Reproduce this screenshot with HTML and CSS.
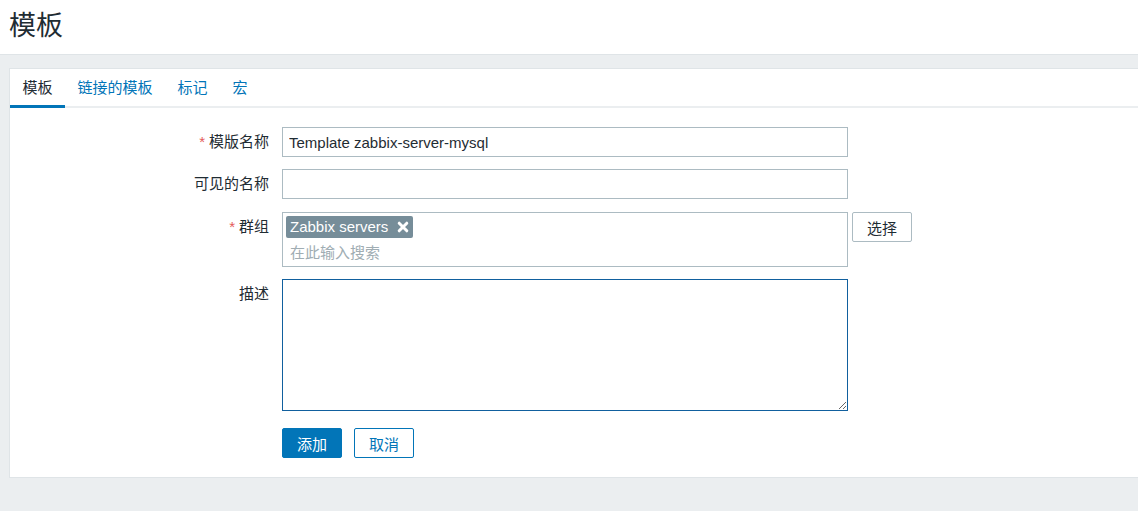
FILE: index.html
```html
<!DOCTYPE html>
<html lang="zh-CN">
<head>
<meta charset="utf-8">
<title>模板</title>
<link rel="stylesheet" href="styles.css">
</head>
<body>
<header class="page-header">
  <h1 class="page-title">模板</h1>
</header>
<main class="panel">
  <ul class="tabs">
    <li class="tab tab-active">模板</li>
    <li class="tab">链接的模板</li>
    <li class="tab">标记</li>
    <li class="tab">宏</li>
  </ul>
  <form class="form">
    <div class="row">
      <label class="label"><span class="req">*</span>模版名称</label>
      <div class="field"><input class="input" type="text" value="Template zabbix-server-mysql"></div>
    </div>
    <div class="row">
      <label class="label">可见的名称</label>
      <div class="field"><input class="input" type="text" value=""></div>
    </div>
    <div class="row row-group">
      <label class="label"><span class="req">*</span>群组</label>
      <div class="field field-inline">
        <div class="multiselect">
          <div class="tags">
            <span class="tag">Zabbix servers<svg class="tag-x" viewBox="0 0 12 12" width="12" height="12"><path d="M2.2 2.2 L9.8 9.8 M9.8 2.2 L2.2 9.8" stroke="#fff" stroke-width="3" stroke-linecap="round"/></svg></span>
          </div>
          <div class="ms-search">在此输入搜索</div>
        </div>
        <button type="button" class="btn-alt">选择</button>
      </div>
    </div>
    <div class="row">
      <label class="label">描述</label>
      <div class="field"><textarea class="textarea"></textarea></div>
    </div>
    <div class="row row-buttons">
      <div class="label"></div>
      <div class="field buttons">
        <button type="button" class="btn-primary">添加</button>
        <button type="button" class="btn-secondary">取消</button>
      </div>
    </div>
  </form>
</main>
</body>
</html>
```

FILE: styles.css
```css
* { box-sizing: border-box; }
html, body {
  margin: 0;
  padding: 0;
  background: #ebeef0;
  font-family: "Liberation Sans", Arial, "Noto Sans CJK SC", sans-serif;
  font-size: 15px;
  color: #1f2c33;
}
.page-header {
  height: 55px;
  background: #fff;
  border-bottom: 1px solid #dfe4e7;
  padding-left: 9px;
  display: flex;
  align-items: center;
}
.page-title {
  margin: 0;
  font-size: 27px;
  font-weight: normal;
  color: #1f2c33;
  line-height: 1;
  padding-bottom: 1px;
}
.panel {
  margin: 13px 0 0 9px;
  background: #fff;
  border: 1px solid #dfe4e7;
  border-right: none;
  height: 410px;
}
.tabs {
  list-style: none;
  margin: 0;
  padding: 0;
  display: flex;
  border-bottom: 2px solid #ebeef0;
  height: 39px;
}
.tab {
  height: 39px;
  padding: 0 12.5px;
  line-height: 37px;
  color: #0275b8;
  cursor: pointer;
}
.tab-active {
  color: #1f2c33;
  box-shadow: inset 0 -3px 0 #0275b8;
}
.form {
  padding-top: 19px;
  display: flex;
  flex-direction: column;
  gap: 12px;
}
.row {
  display: flex;
  gap: 13px;
}
.row-group { margin-top: 1px; }
.row-buttons { margin-top: 5px; }
.label {
  width: 259px;
  flex: none;
  text-align: right;
  line-height: 30px;
  color: #1f2c33;
}
.req {
  color: #e45959;
  margin-right: 4px;
}
.field { display: flex; }
.field-inline { gap: 4px; align-items: flex-start; }
.input {
  width: 566px;
  height: 30px;
  border: 1px solid #acbbc2;
  padding: 0 6px;
  font: inherit;
  color: #1f2c33;
  outline: none;
}
.multiselect {
  width: 566px;
  height: 55px;
  border: 1px solid #acbbc2;
  padding: 3px;
}
.tags { display: flex; }
.tag {
  display: inline-flex;
  align-items: center;
  height: 22px;
  background: #768d99;
  color: #fff;
  border-radius: 2px;
  padding: 0 4px 0 4px;
  gap: 9px;
  line-height: 22px;
}
.tag-x { display: block; }
.ms-search {
  color: #a0adb3;
  line-height: 26px;
  padding-top: 2px;
  padding-left: 4px;
}
.btn-alt {
  width: 60px;
  height: 30px;
  background: #fff;
  border: 1px solid #acbbc2;
  border-radius: 2px;
  color: #1f2c33;
  font: inherit;
  padding: 0;
}
.textarea {
  width: 566px;
  height: 132px;
  border: 1px solid #11609e;
  outline: none;
  font: inherit;
  resize: both;
}
.buttons { gap: 12px; }
.btn-primary, .btn-secondary {
  width: 60px;
  height: 30px;
  border-radius: 2px;
  font: inherit;
  padding: 0;
}
.btn-primary {
  background: #0275b8;
  border: 1px solid #0275b8;
  color: #fff;
}
.btn-secondary {
  background: #fff;
  border: 1px solid #0275b8;
  color: #0275b8;
}
```
